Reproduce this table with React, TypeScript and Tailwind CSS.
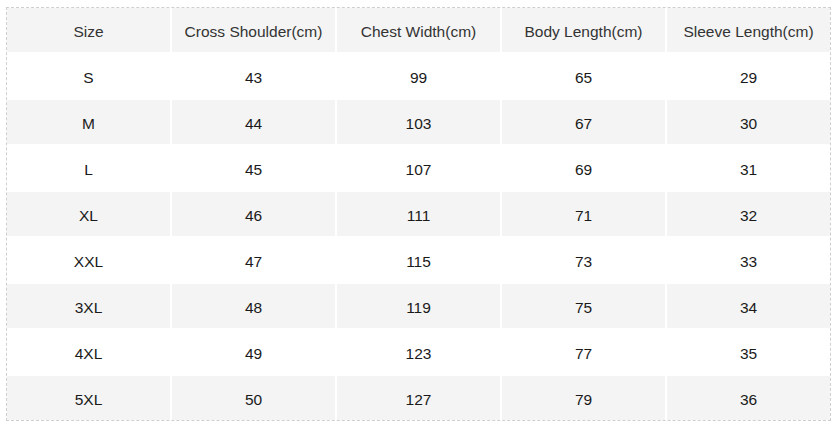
const HEADERS = ['Size', 'Cross Shoulder(cm)', 'Chest Width(cm)', 'Body Length(cm)', 'Sleeve Length(cm)'];

const ROWS: (string | number)[][] = [
  ['S', 43, 99, 65, 29],
  ['M', 44, 103, 67, 30],
  ['L', 45, 107, 69, 31],
  ['XL', 46, 111, 71, 32],
  ['XXL', 47, 115, 73, 33],
  ['3XL', 48, 119, 75, 34],
  ['4XL', 49, 123, 77, 35],
  ['5XL', 50, 127, 79, 36],
];

export default function App() {
  return (
    <div className="h-[424px] w-[837px] bg-white pl-[6px] pt-[7px] font-['Liberation_Sans',Arial,sans-serif]">
      <div className="w-[825px] border border-dashed border-[#cfcfcf]">
        <div className="grid grid-cols-5 gap-[2px] bg-white">
          {HEADERS.map((h) => (
            <div key={h} className="flex h-[44px] items-center justify-center bg-[#f4f4f4] pt-[3px] text-[15.5px] text-[#333]">
              {h}
            </div>
          ))}
          {ROWS.map((row, i) =>
            row.map((cell, j) => (
              <div
                key={`${i}-${j}`}
                className={`flex h-[44px] items-center justify-center pt-[3px] text-[15.5px] text-[#1a1a1a] ${
                  i % 2 === 1 ? 'bg-[#f4f4f4]' : 'bg-white'
                }`}
              >
                {cell}
              </div>
            ))
          )}
        </div>
      </div>
    </div>
  );
}
